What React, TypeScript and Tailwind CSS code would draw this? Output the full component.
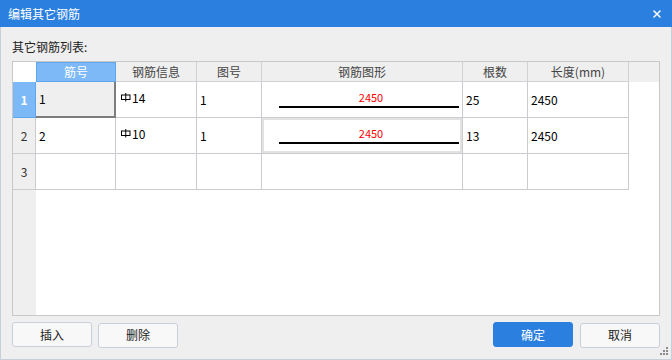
import { X } from 'lucide-react'

const FONT = '"Noto Sans CJK SC", "Microsoft YaHei", sans-serif'

type Col = { title: string; w: string }

const COLS: Col[] = [
  { title: '筋号', w: 'w-[80px]' },
  { title: '钢筋信息', w: 'w-[81px]' },
  { title: '图号', w: 'w-[65px]' },
  { title: '钢筋图形', w: 'w-[201px]' },
  { title: '根数', w: 'w-[65px]' },
  { title: '长度(mm)', w: 'w-[101px]' },
]

type Row = { no: string; info: string; fig: string; shape: string; count: string; len: string }

const ROWS: Row[] = [
  { no: '1', info: '14', fig: '1', shape: '2450', count: '25', len: '2450' },
  { no: '2', info: '10', fig: '1', shape: '2450', count: '13', len: '2450' },
]

// Rebar grade symbol (the boxed "Φ" from the design font)
function GradeMark() {
  return (
    <svg width="10" height="9" viewBox="0 0 10 9" className="mt-[3px] shrink-0">
      <rect x="0.5" y="2" width="8.5" height="4.5" fill="none" stroke="#000" strokeWidth="1" />
      <line x1="4.75" y1="0" x2="4.75" y2="8.5" stroke="#000" strokeWidth="1" />
    </svg>
  )
}

function Shape({ value, framed }: { value: string; framed?: boolean }) {
  return (
    <div
      className={
        'flex h-full w-[201px] flex-col border-r border-b border-[#cbcbd0] pt-[8px] pl-[17px] pr-[3px] ' +
        (framed ? 'shadow-[inset_0_0_0_2px_#e2e2e2]' : '')
      }
    >
      <span className="pl-[4px] text-center text-[11px] leading-[14px] text-[#ff0000]">{value}</span>
      <div className="mt-[2px] h-[2px] w-full bg-black" />
    </div>
  )
}

function Cell({ w, children, selected }: { w: string; children?: React.ReactNode; selected?: boolean }) {
  return (
    <div
      className={
        w +
        ' flex h-full items-center pl-[3px] text-[12px] leading-[16px] text-black ' +
        (selected
          ? 'border-r-2 border-b-2 border-[#7d7d7d] bg-[#efefef]'
          : 'border-r border-b border-[#cbcbd0]')
      }
    >
      {children}
    </div>
  )
}

function Btn({ label, primary }: { label: string; primary?: boolean }) {
  return (
    <button
      className={
        'h-[25px] w-[80px] rounded-[3px] border text-[12px] leading-[16px] ' +
        (primary
          ? 'border-[#2b7fdf] bg-[#2b7fdf] text-white'
          : 'border-[#c7cfdb] bg-[#f8f8f8] text-[#222]')
      }
    >
      {label}
    </button>
  )
}

export default function App() {
  return (
    <div className="relative flex h-[360px] w-[672px] flex-col bg-[#efefef]" style={{ fontFamily: FONT }}>
      {/* Title bar */}
      <div className="flex h-[27px] shrink-0 items-center justify-between bg-[#2b7fdf] pl-[8px] pr-[9px] text-white">
        <span className="text-[12px] leading-[16px]">编辑其它钢筋</span>
        <X size={12} strokeWidth={3} />
      </div>

      <div className="flex flex-1 flex-col border-x border-b border-[#c9cfd9] px-[11px]">
        <div className="h-[34px] shrink-0 pt-[12px] text-[12px] leading-[16px] text-[#222]">其它钢筋列表:</div>

        {/* Grid */}
        <div className="flex h-[255px] shrink-0 flex-col border border-[#c8c8cc] bg-white">
          <div className="flex h-[20px] shrink-0 bg-[#efefef] text-[12px] leading-[16px] text-[#444]">
            <div className="h-full w-[23px] bg-white" />
            {COLS.map((c, i) =>
              i === 0 ? (
                <div
                  key={c.title}
                  className={c.w + ' flex h-full items-center justify-center border border-[#5fa6ee] bg-[#7cb9f6] text-white'}
                >
                  {c.title}
                </div>
              ) : (
                <div
                  key={c.title}
                  className={c.w + ' flex h-full items-center justify-center border-r border-b border-[#d2d2d6]'}
                >
                  {c.title}
                </div>
              )
            )}
          </div>

          {ROWS.map((r, i) => (
            <div key={r.no} className="flex h-[36px] shrink-0">
              <div
                className={
                  'flex h-full w-[23px] items-center justify-center border-r border-b text-[12px] ' +
                  (i === 0
                    ? 'border-[#5fa6ee] bg-[#7cb9f6] font-bold text-white'
                    : 'border-[#cbcbd0] bg-[#efefef] text-[#333]')
                }
              >
                {r.no}
              </div>
              <Cell w="w-[80px]" selected={i === 0}>
                {r.no}
              </Cell>
              <div className="flex h-full w-[81px] items-start border-r border-b border-[#cbcbd0] pt-[8px] pl-[5px] text-[12px] leading-[16px] text-black">
                <GradeMark />
                <span className="ml-[1px]">{r.info}</span>
              </div>
              <Cell w="w-[65px]">{r.fig}</Cell>
              <Shape value={r.shape} framed={i === 1} />
              <Cell w="w-[65px]">{r.count}</Cell>
              <Cell w="w-[101px]">{r.len}</Cell>
            </div>
          ))}

          <div className="flex h-[36px] shrink-0">
            <div className="flex h-full w-[23px] items-center justify-center border-r border-b border-[#cbcbd0] bg-[#efefef] text-[12px] text-[#333]">
              3
            </div>
            {COLS.map((c) => (
              <div key={c.title} className={c.w + ' h-full border-r border-b border-[#cbcbd0]'} />
            ))}
          </div>

          <div className="flex flex-1">
            <div className="h-full w-[23px] bg-[#efefef]" />
          </div>
        </div>

        {/* Buttons */}
        <div className="mt-[6px] flex h-[25px] shrink-0 items-center">
          <Btn label="插入" />
          <div className="ml-[6px]">
            <Btn label="删除" />
          </div>
          <div className="flex-1" />
          <Btn label="确定" primary />
          <div className="ml-[7px]">
            <Btn label="取消" />
          </div>
        </div>
      </div>

      {/* Resize grip */}
      <svg width="9" height="9" viewBox="0 0 9 9" className="absolute right-[3px] bottom-[4px]">
        <rect x="6" y="0" width="2" height="2" fill="#8a8a8a" />
        <rect x="3" y="3" width="2" height="2" fill="#8a8a8a" />
        <rect x="6" y="3" width="2" height="2" fill="#8a8a8a" />
        <rect x="0" y="6" width="2" height="2" fill="#8a8a8a" />
        <rect x="3" y="6" width="2" height="2" fill="#8a8a8a" />
        <rect x="6" y="6" width="2" height="2" fill="#8a8a8a" />
      </svg>
    </div>
  )
}
